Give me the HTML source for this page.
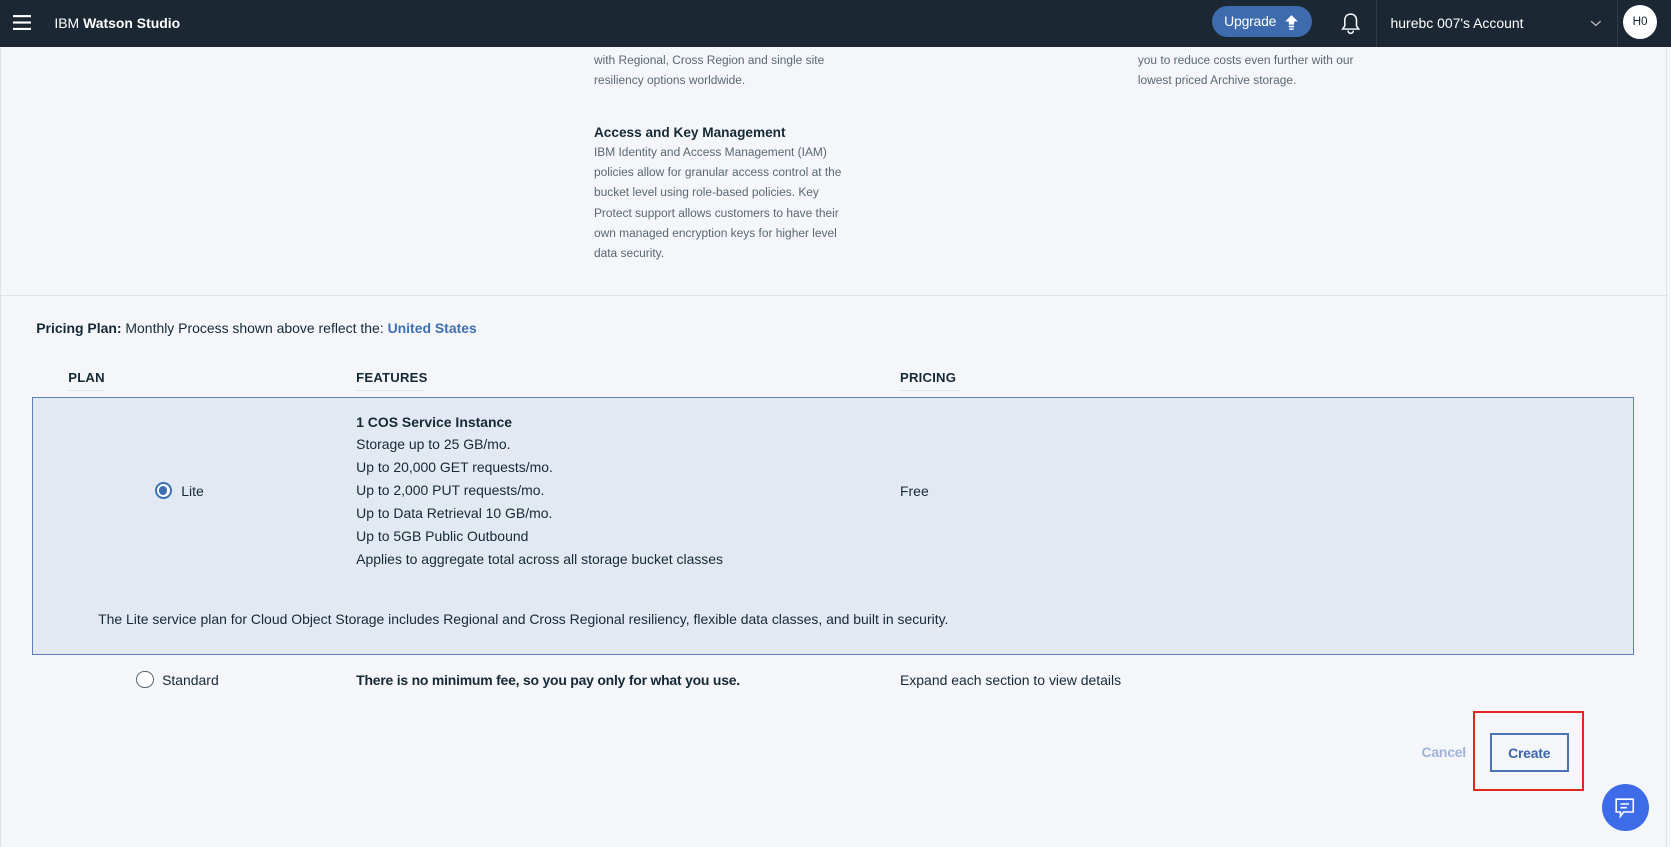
<!DOCTYPE html>
<html><head><meta charset="utf-8"><style>
html{zoom:1.06637}
*{box-sizing:border-box;margin:0;padding:0}
body{width:1567px;height:794px;overflow:hidden;background:#f4f6fa;font-family:"Liberation Sans",sans-serif;color:#152935;position:relative}
.a{position:absolute;white-space:nowrap}
.hdr{position:absolute;left:0;top:0;width:1567px;height:44px;background:#1b2834}
.d{font-size:11.2px;color:#5a6872;line-height:19px}
.t{font-size:13.1px;line-height:21.5px;color:#152935}
.h{font-size:12.3px;font-weight:bold;letter-spacing:.2px}
</style></head><body>
<div class="hdr">
 <svg class="a" style="left:12px;top:13px" width="17" height="16"><rect y="1" width="17" height="2" fill="#fff"/><rect y="7" width="17" height="2" fill="#fff"/><rect y="13" width="17" height="2" fill="#fff"/></svg>
 <div class="a" style="left:51px;top:14px;color:#fff;font-size:13.1px">IBM <b>Watson Studio</b></div>
 <div class="a" style="left:1137px;top:6px;width:93px;height:29px;border-radius:15px;background:#3e6bad;color:#fff;font-size:13.1px;line-height:30px;padding-left:11px;letter-spacing:-.2px">Upgrade
  <svg style="position:absolute;left:67px;top:7px" width="14" height="16"><path d="M7 1 L13 7 H9.5 V10 H4.5 V7 H1 Z" fill="#fff"/><rect x="4.5" y="11" width="5" height="1.5" fill="#fff"/><rect x="5" y="13.5" width="4" height="1.3" fill="#fff"/></svg></div>
 <svg class="a" style="left:1257px;top:11px" width="20" height="22"><path d="M10 2 C6 2 4.5 5 4.5 8 V13 L2.5 16 H17.5 L15.5 13 V8 C15.5 5 14 2 10 2 Z" fill="none" stroke="#fff" stroke-width="1.4"/><path d="M7.5 17.5 A2.5 2.5 0 0 0 12.5 17.5" fill="none" stroke="#fff" stroke-width="1.4"/></svg>
 <div class="a" style="left:1290px;top:0;width:1px;height:44px;background:#2e3d49"></div>
 <div class="a" style="left:1304px;top:14px;color:#fff;font-size:13.1px">hurebc 007's Account</div>
 <svg class="a" style="left:1491px;top:18px" width="11" height="8"><path d="M1 2 L5.5 6 L10 2" fill="none" stroke="#bbb" stroke-width="1.2"/></svg>
 <div class="a" style="left:1516px;top:0;width:1px;height:44px;background:#2e3d49"></div>
 <div class="a" style="left:1522px;top:5px;width:32px;height:32px;border-radius:50%;background:#fff;color:#152935;font-size:11px;text-align:center;line-height:32px">H0</div>
</div>
<div class="a" style="left:0;top:44px;width:1px;height:750px;background:#dfe3e6"></div>
<div class="a" style="left:1562px;top:44px;width:1px;height:750px;background:#dfe3e6"></div>

<div class="a d" style="left:557px;top:47px">with Regional, Cross Region and single site<br>resiliency options worldwide.</div>
<div class="a d" style="left:1067px;top:47px">you to reduce costs even further with our<br>lowest priced Archive storage.</div>
<div class="a" style="left:557px;top:117px;font-size:12.8px;font-weight:bold">Access and Key Management</div>
<div class="a d" style="left:557px;top:133px">IBM Identity and Access Management (IAM)<br>policies allow for granular access control at the<br>bucket level using role-based policies. Key<br>Protect support allows customers to have their<br>own managed encryption keys for higher level<br>data security.</div>
<div class="a" style="left:0;top:277px;width:1562px;height:1px;background:#dfe3e6"></div>

<div class="a t" style="left:34px;top:297px"><b>Pricing Plan:</b> Monthly Process shown above reflect the: <b style="color:#3d70b2">United States</b></div>
<div class="a h" style="left:64px;top:347px">PLAN</div>
<div class="a" style="left:64px;top:366px;width:34px;height:1px;background:#dfe3e6"></div>
<div class="a h" style="left:334px;top:347px">FEATURES</div>
<div class="a" style="left:334px;top:366px;width:64px;height:1px;background:#dfe3e6"></div>
<div class="a h" style="left:844px;top:347px">PRICING</div>
<div class="a" style="left:844px;top:366px;width:56px;height:1px;background:#dfe3e6"></div>

<div class="a" style="left:30px;top:372px;width:1502px;height:242px;background:#e3e9f2;border:1px solid #5b7fbe"></div>
<div class="a" style="left:145px;top:452px;width:16px;height:16px;border-radius:50%;border:2px solid #3d70b2;background:#fff"></div>
<div class="a" style="left:149px;top:456px;width:8px;height:8px;border-radius:50%;background:#3d70b2"></div>
<div class="a t" style="left:170px;top:450px">Lite</div>
<div class="a t" style="left:334px;top:385px"><b>1 COS Service Instance</b><br>Storage up to 25 GB/mo.<br>Up to 20,000 GET requests/mo.<br>Up to 2,000 PUT requests/mo.<br>Up to Data Retrieval 10 GB/mo.<br>Up to 5GB Public Outbound<br>Applies to aggregate total across all storage bucket classes</div>
<div class="a t" style="left:844px;top:450px">Free</div>
<div class="a t" style="left:92px;top:570px">The Lite service plan for Cloud Object Storage includes Regional and Cross Regional resiliency, flexible data classes, and built in security.</div>

<div class="a" style="left:128px;top:629px;width:16px;height:16px;border-radius:50%;border:1.5px solid #5a6872;background:#fff"></div>
<div class="a t" style="left:152px;top:627px">Standard</div>
<div class="a t" style="left:334px;top:627px;font-weight:bold;letter-spacing:-.2px">There is no minimum fee, so you pay only for what you use.</div>
<div class="a t" style="left:844px;top:627px">Expand each section to view details</div>

<div class="a" style="left:1333px;top:698px;font-size:13.1px;font-weight:bold;color:#9fb4d8;letter-spacing:-.2px">Cancel</div>
<div class="a" style="left:1381px;top:667px;width:104px;height:75px;border:2px solid #e2261d"></div>
<div class="a" style="left:1397px;top:687px;width:74px;height:37px;border:2px solid #4a73b6;color:#3d66aa;font-size:13.1px;font-weight:bold;text-align:center;line-height:34px;letter-spacing:-.2px">Create</div>
<div class="a" style="left:1502px;top:735px;width:44px;height:44px;border-radius:50%;background:#3e6ce8"></div>
<svg class="a" style="left:1513px;top:746px" width="22" height="22"><path d="M3 3 H19 V15 H10 L7 19 V15 H3 Z" fill="none" stroke="#fff" stroke-width="1.5"/><path d="M7 7.5 H15 M7 11 H13" stroke="#fff" stroke-width="1.5"/></svg>
</body></html>
